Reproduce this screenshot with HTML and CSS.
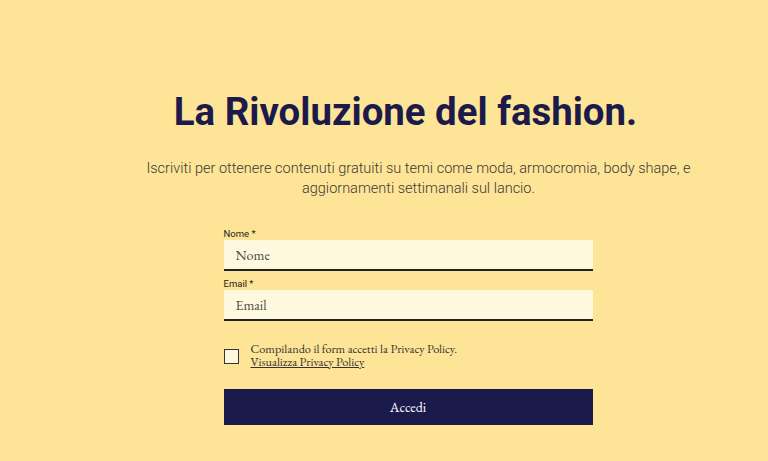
FILE: index.html
```html
<!DOCTYPE html>
<html>
  <head>
    <meta charset="UTF-8" />
    <title>La Rivoluzione del fashion</title>
    <link rel="stylesheet" href="styles.css">
  </head>
  <body>
    <div class="container">
      <h1>La Rivoluzione del fashion.</h1>
      <p class="intro">Iscriviti per ottenere contenuti gratuiti su temi come moda, armocromia, body shape, e aggiornamenti settimanali sul lancio.</p>

      <form class="signup">
        <div class="field">
          <label for="nome">Nome *</label>
          <input type="text" id="nome" placeholder="Nome" class="text-input" />
        </div>
        <div class="field">
          <label for="email">Email *</label>
          <input type="email" id="email" placeholder="Email" class="text-input" />
        </div>

        <div class="privacy">
          <input type="checkbox" id="privacy" class="check" />
          <div class="privacy-text">
            Compilando il form accetti la Privacy Policy.<br />
            <a href="#">Visualizza Privacy Policy</a>
          </div>
        </div>

        <button type="button" class="submit-button">Accedi</button>
      </form>
    </div>
  </body>
</html>
```

FILE: styles.css
```css
body {
  margin: 0;
  background-color: #fee496;
  font-family: Roboto, 'Liberation Sans', Arial, sans-serif;
}

.container {
  width: 720px;
  padding: 89px 0 0 48px;
  display: flex;
  flex-direction: column;
  align-items: center;
}

h1 {
  margin: 0 5px 0 0;
  color: #1b1a4b;
  font-size: 38.4px;
  font-weight: 700;
  line-height: 46px;
}

.intro {
  width: 560px;
  margin: 24px 0 0 21px;
  text-align: center;
  color: #3b3a36;
  font-size: 14.5px;
  font-weight: 300;
  line-height: 20px;
}

.signup {
  width: 369px;
  margin-top: 29px;
}

.field {
  margin-bottom: 7px;
}

.field label {
  display: block;
  font-size: 9.5px;
  color: #222;
  line-height: 11px;
  margin-bottom: 1px;
}

.text-input {
  display: block;
  width: 100%;
  box-sizing: border-box;
  height: 31px;
  padding: 0 12px;
  border: none;
  border-bottom: 2px solid #222;
  background-color: #fef8df;
  font-family: 'EB Garamond', 'Liberation Serif', serif;
  font-size: 14px;
  color: #333;
}

.text-input::placeholder {
  color: #4a4a4a;
}

.text-input:focus {
  outline: none;
}

.privacy {
  display: flex;
  align-items: center;
  margin-top: 22px;
  font-family: 'EB Garamond', 'Liberation Serif', serif;
  font-size: 12.3px;
  line-height: 13px;
  color: #333;
}

.check {
  appearance: none;
  flex-shrink: 0;
  width: 15px;
  height: 15px;
  margin: 0 12px 0 0;
  border: 1.5px solid #333;
  background-color: #fef8df;
}

.privacy-text a {
  color: #333;
  text-decoration: underline;
}

.submit-button {
  display: block;
  width: 100%;
  height: 36px;
  margin-top: 20px;
  border: none;
  background-color: #1b1a4d;
  color: #fff;
  font-family: 'EB Garamond', 'Liberation Serif', serif;
  font-size: 14px;
  cursor: pointer;
}
```
